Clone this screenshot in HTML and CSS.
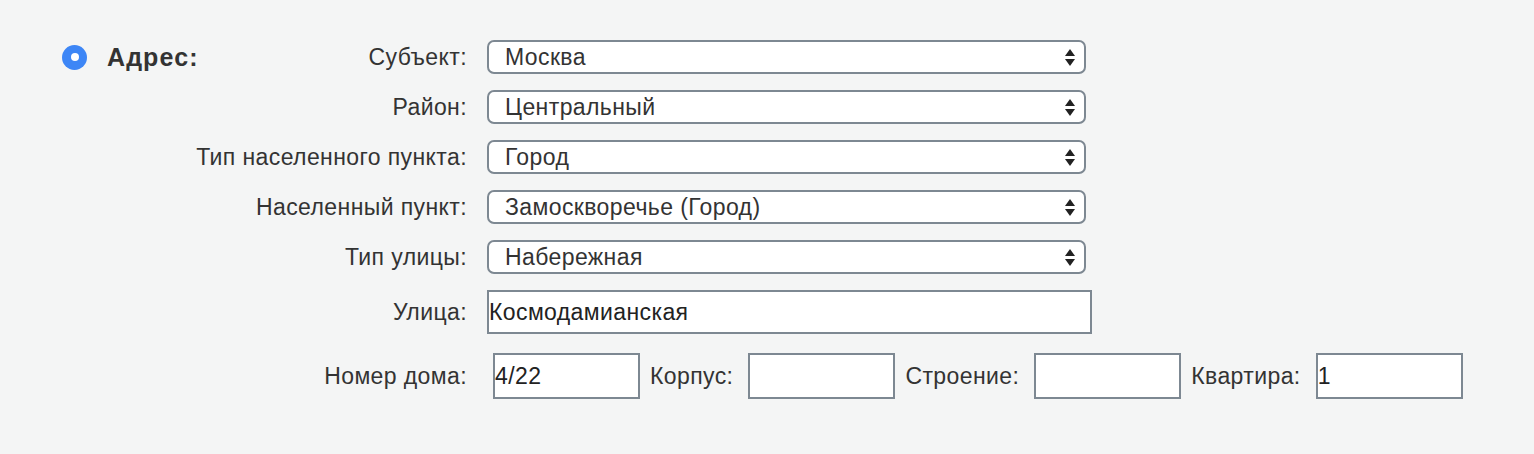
FILE: index.html
```html
<!DOCTYPE html>
<html lang="ru">
<head>
<meta charset="utf-8">
<title>Адрес</title>
<link rel="stylesheet" href="styles.css">
</head>
<body>
<div class="address">
  <div class="head">
    <span class="radio"><span class="dot"></span></span>
    <span class="title">Адрес:</span>
  </div>
  <div class="fields">
    <label class="lbl">Субъект:</label>
    <div class="select"><span>Москва</span><span class="arrows"><i class="up"></i><i class="down"></i></span></div>

    <label class="lbl">Район:</label>
    <div class="select"><span>Центральный</span><span class="arrows"><i class="up"></i><i class="down"></i></span></div>

    <label class="lbl">Тип населенного пункта:</label>
    <div class="select"><span>Город</span><span class="arrows"><i class="up"></i><i class="down"></i></span></div>

    <label class="lbl">Населенный пункт:</label>
    <div class="select"><span>Замоскворечье (Город)</span><span class="arrows"><i class="up"></i><i class="down"></i></span></div>

    <label class="lbl">Тип улицы:</label>
    <div class="select"><span>Набережная</span><span class="arrows"><i class="up"></i><i class="down"></i></span></div>

    <label class="lbl">Улица:</label>
    <div class="street"><input class="text wide" type="text" value="Космодамианская"></div>

    <label class="lbl last">Номер дома:</label>
    <div class="house last">
      <input class="text small first" type="text" value="4/22">
      <span class="sublbl">Корпус:</span>
      <input class="text small" type="text" value="">
      <span class="sublbl">Строение:</span>
      <input class="text small" type="text" value="">
      <span class="sublbl">Квартира:</span>
      <input class="text small" type="text" value="1">
    </div>
  </div>
</div>
</body>
</html>
```
FILE: styles.css
```css
html, body {
  margin: 0;
  padding: 0;
  background: #f4f5f5;
}
body {
  font-family: "Liberation Sans", Arial, sans-serif;
  font-size: 23px;
  letter-spacing: 0.4px;
  color: #333333;
}
.address {
  display: flex;
  align-items: flex-start;
  padding: 40px 0 0 62px;
}
.head {
  display: flex;
  align-items: center;
  width: 125px;
  height: 34px;
  white-space: nowrap;
}
.radio {
  flex: none;
  width: 25px;
  height: 25px;
  border-radius: 50%;
  background: #3d86f6;
  display: flex;
  align-items: center;
  justify-content: center;
  margin-right: 20px;
}
.dot {
  width: 8px;
  height: 8px;
  border-radius: 50%;
  background: #ffffff;
}
.title {
  font-weight: bold;
  font-size: 25px;
  letter-spacing: 1.1px;
}
.fields {
  display: grid;
  grid-template-columns: 280px auto;
  column-gap: 20px;
  row-gap: 16px;
  align-items: center;
}
.lbl {
  text-align: right;
  white-space: nowrap;
}
.lbl.last, .house.last {
  margin-top: 3px;
}
.select {
  box-sizing: border-box;
  width: 599px;
  height: 34px;
  border: 2px solid #7d8892;
  border-radius: 7px;
  background: #ffffff;
  display: flex;
  align-items: center;
  justify-content: space-between;
  padding: 0 9px 0 16px;
}
.arrows {
  display: flex;
  flex-direction: column;
  align-items: center;
  gap: 3px;
}
.arrows i {
  display: block;
  width: 0;
  height: 0;
  border-left: 5px solid transparent;
  border-right: 5px solid transparent;
}
.arrows .up {
  border-bottom: 7px solid #222222;
}
.arrows .down {
  border-top: 7px solid #222222;
}
.text {
  box-sizing: border-box;
  border: 2px solid #7d8892;
  border-radius: 0;
  background: #ffffff;
  font-family: "Liberation Sans", Arial, sans-serif;
  font-size: 23px;
  letter-spacing: 0.4px;
  color: #222222;
  padding: 0;
  margin: 0;
  outline: none;
}
.wide {
  width: 605px;
  height: 44px;
}
.house {
  display: flex;
  align-items: center;
}
.small {
  width: 147px;
  height: 46px;
}
.small.first {
  margin-left: 6px;
}
.sublbl {
  margin: 0 15px 0 10px;
}
```
